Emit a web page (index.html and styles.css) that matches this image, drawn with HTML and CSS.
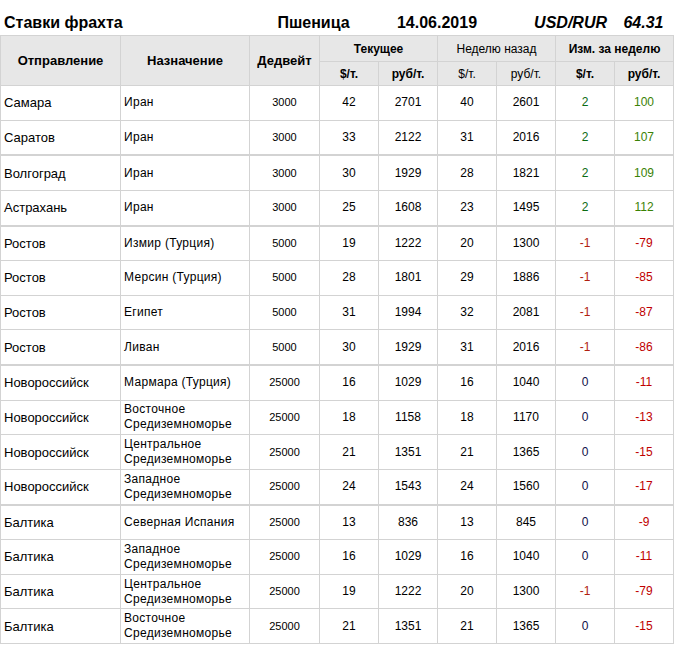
FILE: index.html
```html
<!DOCTYPE html>
<html lang="ru">
<head>
<meta charset="utf-8">
<title>Ставки фрахта</title>
<link rel="stylesheet" href="styles.css">
</head>
<body>
<div class="page">
  <div class="title-row">
    <div class="t-main">Ставки фрахта</div>
    <div class="t-crop">Пшеница</div>
    <div class="t-date">14.06.2019</div>
    <div class="t-cur">USD/RUR</div>
    <div class="t-rate">64.31</div>
  </div>
  <table class="rates">
    <colgroup>
      <col class="c-from"><col class="c-to"><col class="c-dwt">
      <col class="c-num"><col class="c-num"><col class="c-num"><col class="c-num"><col class="c-num"><col class="c-num">
    </colgroup>
    <thead>
      <tr class="h1">
        <th rowspan="2" class="hmain">Отправление</th>
        <th rowspan="2" class="hmain">Назначение</th>
        <th rowspan="2" class="hmain">Дедвейт</th>
        <th colspan="2">Текущее</th>
        <th colspan="2" class="light">Неделю назад</th>
        <th colspan="2">Изм. за неделю</th>
      </tr>
      <tr class="h2">
        <th>$/т.</th><th>руб/т.</th>
        <th class="light">$/т.</th><th class="light">руб/т.</th>
        <th>$/т.</th><th>руб/т.</th>
      </tr>
    </thead>
    <tbody>
      <tr><td class="from">Самара</td><td class="to">Иран</td><td class="dwt">3000</td><td>42</td><td>2701</td><td>40</td><td>2601</td><td class="up-d">2</td><td class="up-r">100</td></tr>
      <tr class="grp"><td class="from">Саратов</td><td class="to">Иран</td><td class="dwt">3000</td><td>33</td><td>2122</td><td>31</td><td>2016</td><td class="up-d">2</td><td class="up-r">107</td></tr>
      <tr><td class="from">Волгоград</td><td class="to">Иран</td><td class="dwt">3000</td><td>30</td><td>1929</td><td>28</td><td>1821</td><td class="up-d">2</td><td class="up-r">109</td></tr>
      <tr class="grp"><td class="from">Астрахань</td><td class="to">Иран</td><td class="dwt">3000</td><td>25</td><td>1608</td><td>23</td><td>1495</td><td class="up-d">2</td><td class="up-r">112</td></tr>
      <tr><td class="from">Ростов</td><td class="to">Измир (Турция)</td><td class="dwt">5000</td><td>19</td><td>1222</td><td>20</td><td>1300</td><td class="dn-d">-1</td><td class="dn-r">-79</td></tr>
      <tr><td class="from">Ростов</td><td class="to">Мерсин (Турция)</td><td class="dwt">5000</td><td>28</td><td>1801</td><td>29</td><td>1886</td><td class="dn-d">-1</td><td class="dn-r">-85</td></tr>
      <tr><td class="from">Ростов</td><td class="to">Египет</td><td class="dwt">5000</td><td>31</td><td>1994</td><td>32</td><td>2081</td><td class="dn-d">-1</td><td class="dn-r">-87</td></tr>
      <tr class="grp"><td class="from">Ростов</td><td class="to">Ливан</td><td class="dwt">5000</td><td>30</td><td>1929</td><td>31</td><td>2016</td><td class="dn-d">-1</td><td class="dn-r">-86</td></tr>
      <tr><td class="from">Новороссийск</td><td class="to">Мармара (Турция)</td><td class="dwt">25000</td><td>16</td><td>1029</td><td>16</td><td>1040</td><td class="zero">0</td><td class="dn-r">-11</td></tr>
      <tr><td class="from">Новороссийск</td><td class="to">Восточное Средиземноморье</td><td class="dwt">25000</td><td>18</td><td>1158</td><td>18</td><td>1170</td><td class="zero">0</td><td class="dn-r">-13</td></tr>
      <tr><td class="from">Новороссийск</td><td class="to">Центральное Средиземноморье</td><td class="dwt">25000</td><td>21</td><td>1351</td><td>21</td><td>1365</td><td class="zero">0</td><td class="dn-r">-15</td></tr>
      <tr class="grp"><td class="from">Новороссийск</td><td class="to">Западное Средиземноморье</td><td class="dwt">25000</td><td>24</td><td>1543</td><td>24</td><td>1560</td><td class="zero">0</td><td class="dn-r">-17</td></tr>
      <tr><td class="from">Балтика</td><td class="to">Северная Испания</td><td class="dwt">25000</td><td>13</td><td>836</td><td>13</td><td>845</td><td class="zero">0</td><td class="dn-r">-9</td></tr>
      <tr><td class="from">Балтика</td><td class="to">Западное Средиземноморье</td><td class="dwt">25000</td><td>16</td><td>1029</td><td>16</td><td>1040</td><td class="zero">0</td><td class="dn-r">-11</td></tr>
      <tr><td class="from">Балтика</td><td class="to">Центральное Средиземноморье</td><td class="dwt">25000</td><td>19</td><td>1222</td><td>20</td><td>1300</td><td class="dn-d">-1</td><td class="dn-r">-79</td></tr>
      <tr><td class="from">Балтика</td><td class="to">Восточное Средиземноморье</td><td class="dwt">25000</td><td>21</td><td>1351</td><td>21</td><td>1365</td><td class="zero">0</td><td class="dn-r">-15</td></tr>
    </tbody>
  </table>
</div>
</body>
</html>
```

FILE: styles.css
```css
html, body {
  margin: 0;
  padding: 0;
  background: #ffffff;
}

body {
  font-family: "Liberation Sans", Arial, sans-serif;
  color: #000000;
}

.page {
  width: 673px;
}

.title-row {
  display: grid;
  grid-template-columns: 249px 129px 118px 118px 59px;
  height: 35px;
  align-items: end;
  font-size: 16px;
  font-weight: bold;
  line-height: 18px;
  box-sizing: border-box;
}

.title-row > div {
  padding-bottom: 3px;
}

.t-main {
  padding-left: 4px;
}

.t-crop, .t-date, .t-rate {
  text-align: center;
}

.t-cur {
  text-align: right;
  padding-right: 7px;
  font-style: italic;
}

.t-rate {
  font-style: italic;
}

.rates {
  border-collapse: collapse;
  table-layout: fixed;
  width: 673px;
}

.c-from { width: 120px; }
.c-to { width: 129px; }
.c-dwt { width: 70px; }
.c-num { width: 59px; }

.rates th, .rates td {
  border: 1px solid #d3d3d3;
  padding: 0 3px;
  text-align: center;
  vertical-align: middle;
}

.rates th {
  background: #e7e7e7;
  font-weight: bold;
  font-size: 12px;
  line-height: 14px;
  color: #000000;
}

.rates th.hmain {
  font-size: 13px;
}

.rates th.light {
  font-weight: normal;
}

.rates tr.h1 th {
  height: 25px;
}

.rates tr.h2 th {
  height: 23px;
}

.rates td {
  height: 33.625px;
  font-size: 12px;
  line-height: 15px;
  color: #000000;
}

.rates td.from {
  text-align: left;
  font-size: 13px;
}

.rates td.to {
  text-align: left;
  letter-spacing: 0.3px;
}

.rates td.dwt {
  font-size: 11px;
}

.rates tr.grp td {
  border-bottom: 2px solid #d3d3d3;
}

.up-d { color: #0b6b12 !important; }
.up-r { color: #3a8205 !important; }
.dn-d { color: #b02010 !important; }
.dn-r { color: #c00000 !important; }
.zero { color: #10104a !important; }
```
